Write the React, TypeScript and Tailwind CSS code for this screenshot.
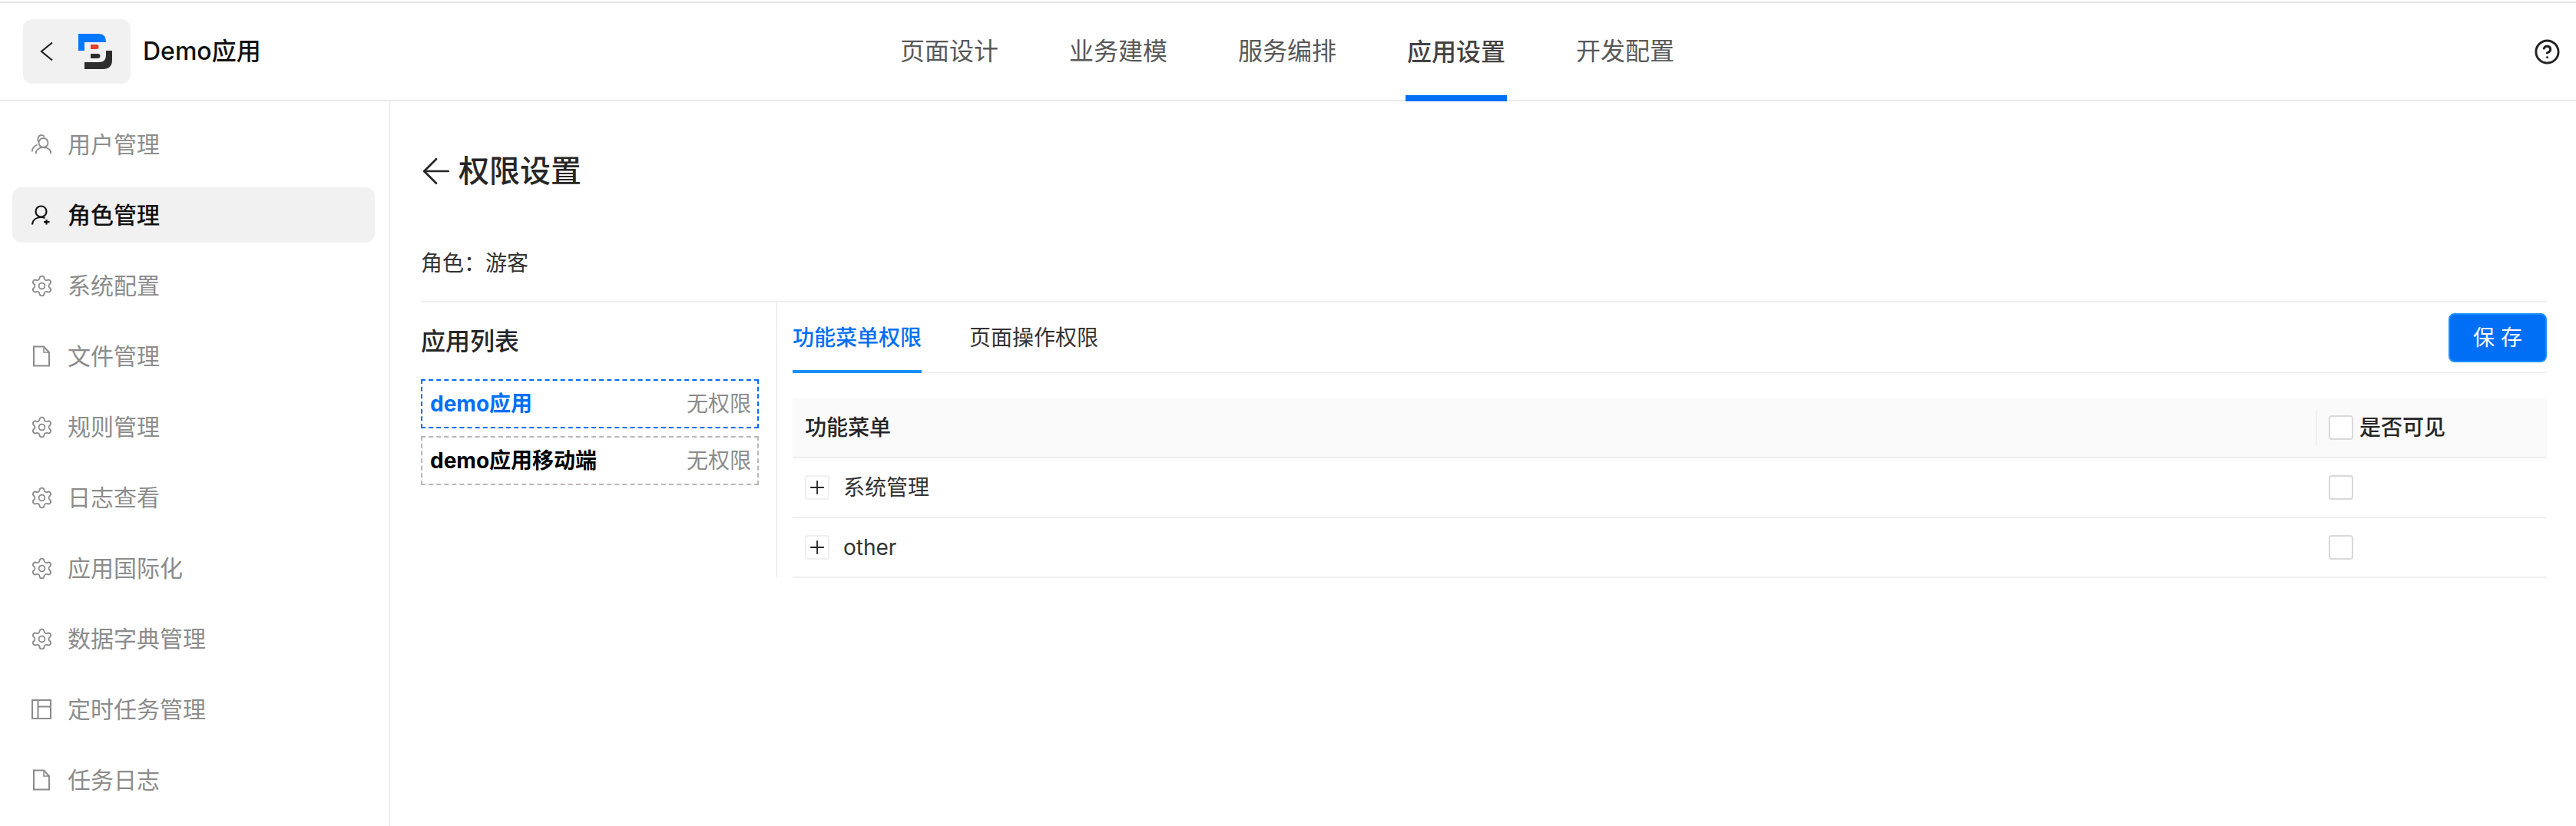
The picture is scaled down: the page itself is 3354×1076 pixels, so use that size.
import { Settings, CircleHelp, ArrowLeft, Plus } from 'lucide-react';

type MenuIcon = 'users' | 'role' | 'gear' | 'file' | 'table';

const menus: { label: string; icon: MenuIcon; active?: boolean }[] = [
  { label: '用户管理', icon: 'users' },
  { label: '角色管理', icon: 'role', active: true },
  { label: '系统配置', icon: 'gear' },
  { label: '文件管理', icon: 'file' },
  { label: '规则管理', icon: 'gear' },
  { label: '日志查看', icon: 'gear' },
  { label: '应用国际化', icon: 'gear' },
  { label: '数据字典管理', icon: 'gear' },
  { label: '定时任务管理', icon: 'table' },
  { label: '任务日志', icon: 'file' },
];

const navs = ['页面设计', '业务建模', '服务编排', '应用设置', '开发配置'];

function Logo() {
  return (
    <svg width="44" height="46" viewBox="102 43 44 46" className="shrink-0">
      <path d="M102 43H129Q138 43 138 54H110V65H102Z" fill="#0077ff" />
      <path d="M138 65H146V77Q146 89 134 89H110V80H129Q138 80 138 71Z" fill="#2d2d2d" />
      <path d="M118 57H126Q128.500 57 128.500 60Q128.500 63 126 63H118Z" fill="#e0412f" />
      <path d="M118 69H127Q130.500 69 130.500 72Q130.500 75 127 75H118Z" fill="#2d2d2d" />
    </svg>
  );
}

function SideIcon({ type }: { type: MenuIcon }) {
  if (type === 'gear') return <Settings size={31} strokeWidth={1.4} className="shrink-0 -mx-[2.5px]" />;
  if (type === 'users')
    return (
      <svg width="26" height="26" viewBox="0 0 26 26" fill="none" stroke="currentColor" strokeWidth="1.800" className="shrink-0">
        <circle cx="15.500" cy="11" r="6" />
        <path d="M5.500 25.500c0-5 3.500-8.500 10-8.500s10 3.500 10 8.500" />
        <path d="M9.500 10C7.500 8 8 1.500 12.500 1c2-.2 3.500.8 4.300 2.200" />
        <path d="M7.500 13.500C3.500 15 1 18.500 .800 22.500" />
      </svg>
    );
  if (type === 'role')
    return (
      <svg width="26" height="26" viewBox="0 0 26 26" fill="none" stroke="currentColor" strokeWidth="2.200" className="shrink-0">
        <circle cx="12.500" cy="8.500" r="7" />
        <path d="M1 25.500c.5-6 5-9.500 11.500-9.500 2 0 3.500.3 5 1" />
        <path d="M19.500 19v6.500M16 22.200h7.500" />
      </svg>
    );
  if (type === 'file')
    return (
      <svg width="24" height="28" viewBox="0 0 24 28" fill="none" stroke="currentColor" strokeWidth="2" className="shrink-0 mx-[1px]">
        <path d="M2 1.500h13l7 7.500v17.500H2z" />
        <path d="M15 1.500v7.500h7" strokeWidth="1.500" />
      </svg>
    );
  return (
    <svg width="26" height="26" viewBox="0 0 26 26" fill="none" stroke="currentColor" strokeWidth="2" className="shrink-0">
      <path d="M1 1h24v24H1z" />
      <path d="M8.500 1v24M8.500 9.500H25" />
    </svg>
  );
}

function Checkbox() {
  return <span className="block w-[32px] h-[32px] rounded-[4px] border-2 border-[#d9d9d9] bg-white shrink-0" />;
}

function Row({ label }: { label: string }) {
  return (
    <div className="flex items-center h-[78px] border-b-2 border-[#f0f0f0]">
      <div className="flex-1 flex items-center pl-[16px]">
        <span className="w-[32px] h-[32px] rounded-[4px] border-2 border-[#f0f0f0] flex items-center justify-center text-[#262626]">
          <Plus size={28} strokeWidth={1.600} className="shrink-0" />
        </span>
        <span className="ml-[18px] text-[28px] text-[#333333]">{label}</span>
      </div>
      <div className="w-[284px]">
        <Checkbox />
      </div>
    </div>
  );
}

export default function App() {
  return (
    <div
      className="h-screen overflow-hidden bg-white pt-[2px] flex flex-col"
      style={{ fontFamily: 'Inter, "Noto Sans CJK SC", sans-serif' }}
    >
      <header className="h-[130px] shrink-0 border-t-2 border-b-2 border-t-[#e5e5e5] border-b-[#e8eaed] flex items-stretch">
        <div className="w-[1170px] shrink-0 flex items-center pl-[30px]">
          <div className="w-[140px] h-[84px] rounded-[12px] bg-[#f1f1f1] flex items-center pl-[22px]">
            <svg width="18" height="26" viewBox="0 0 18 26" fill="none" stroke="#222222" strokeWidth="2.200" className="shrink-0">
              <path d="M16 1.500 2 13l14 11.500" />
            </svg>
            <span className="ml-[32px]">
              <Logo />
            </span>
          </div>
          <span className="ml-[16px] text-[32px] font-medium text-[#111111]">Demo应用</span>
        </div>
        <nav className="flex gap-[88px]">
          {navs.map((n) => (
            <div
              key={n}
              className={
                n === '应用设置'
                  ? 'w-[132px] -mb-[2px] flex items-center justify-center text-[32px] font-medium text-[#434343] border-b-[8px] border-[#006ff5] pt-[8px]'
                  : 'w-[132px] flex items-center justify-center text-[32px] text-[#595959]'
              }
            >
              {n}
            </div>
          ))}
        </nav>
        <div className="flex-1 flex items-center justify-end pr-[20px]">
          <CircleHelp size={35} strokeWidth={2} className="text-[#222222]" />
        </div>
      </header>

      <div className="flex-1 flex min-h-0">
        <aside className="w-[508px] shrink-0 border-r-2 border-[#f0f0f0] pt-[20px] pl-[16px] pr-[18px] flex flex-col gap-[20px]">
          {menus.map((m) => (
            <div
              key={m.label}
              className={
                m.active
                  ? 'h-[72px] shrink-0 rounded-[12px] bg-[#f1f1f1] flex items-center gap-[21px] pl-[25px] text-[30px] font-medium text-[#111111]'
                  : 'h-[72px] shrink-0 rounded-[12px] flex items-center gap-[21px] pl-[25px] text-[30px] text-[#8c8c8c]'
              }
            >
              <SideIcon type={m.icon} />
              <span>{m.label}</span>
            </div>
          ))}
        </aside>

        <main className="flex-1 pl-[40px] pr-[38px] min-w-0">
          <div className="h-[190px] pt-[65px]">
            <div className="flex items-center h-[52px]">
              <ArrowLeft size={54} strokeWidth={1.200} className="text-[#262626] shrink-0 -ml-[7px] mr-[2px]" />
              <span className="text-[40px] font-medium text-[#262626]">权限设置</span>
            </div>
          </div>
          <div className="h-[70px] text-[28px] text-[#333333] flex items-start">
            <span>角色：游客</span>
          </div>
          <div className="border-t-2 border-[#f0f0f0] flex">
            <section className="w-[464px] shrink-0 border-r-2 border-[#f0f0f0] h-[358px] pr-[22px]">
              <div className="h-[100px] flex items-center pt-[2px] text-[32px] font-medium text-[#262626]">应用列表</div>
              <div className="flex flex-col gap-[10px]">
                <div className="h-[64px] border-2 border-dashed border-[#006ff5] flex items-center justify-between pl-[10px] pr-[8px] text-[28px]">
                  <span className="font-bold text-[#006ff5]">demo应用</span>
                  <span className="text-[#8c8c8c]">无权限</span>
                </div>
                <div className="h-[64px] border-2 border-dashed border-[#bfb5b5] flex items-center justify-between pl-[10px] pr-[8px] text-[28px]">
                  <span className="font-bold text-[#000000]">demo应用移动端</span>
                  <span className="text-[#8c8c8c]">无权限</span>
                </div>
              </div>
            </section>
            <section className="flex-1 pl-[20px] min-w-0">
              <div className="h-[92px] border-b-2 border-[#f0f0f0] flex items-stretch">
                <div className="w-[168px] text-[28px] text-[#0070f3] font-medium -mb-[2px] border-b-4 border-[#1890ff] flex items-center justify-center pt-[4px]">
                  功能菜单权限
                </div>
                <div className="ml-[62px] text-[28px] text-[#333333] flex items-center pt-[2px]">页面操作权限</div>
                <div className="flex-1 flex justify-end pt-[14px]">
                  <button className="w-[128px] h-[64px] rounded-[8px] bg-[#006ff5] border-2 border-[#1890ff] text-white text-[28px]">
                    保 存
                  </button>
                </div>
              </div>
              <div className="mt-[32px]">
                <div className="h-[79px] bg-[#fafafa] rounded-t-[4px] border-b-2 border-[#f0f0f0] flex items-center">
                  <div className="flex-1 pl-[16px] text-[28px] font-medium text-[#262626]">功能菜单</div>
                  <div className="w-[301px] h-[46px] flex items-center border-l-2 border-[#f0f0f0] pl-[15px] gap-[8px]">
                    <Checkbox />
                    <span className="text-[28px] font-medium text-[#262626]">是否可见</span>
                  </div>
                </div>
                <Row label="系统管理" />
                <Row label="other" />
              </div>
            </section>
          </div>
        </main>
      </div>
    </div>
  );
}
